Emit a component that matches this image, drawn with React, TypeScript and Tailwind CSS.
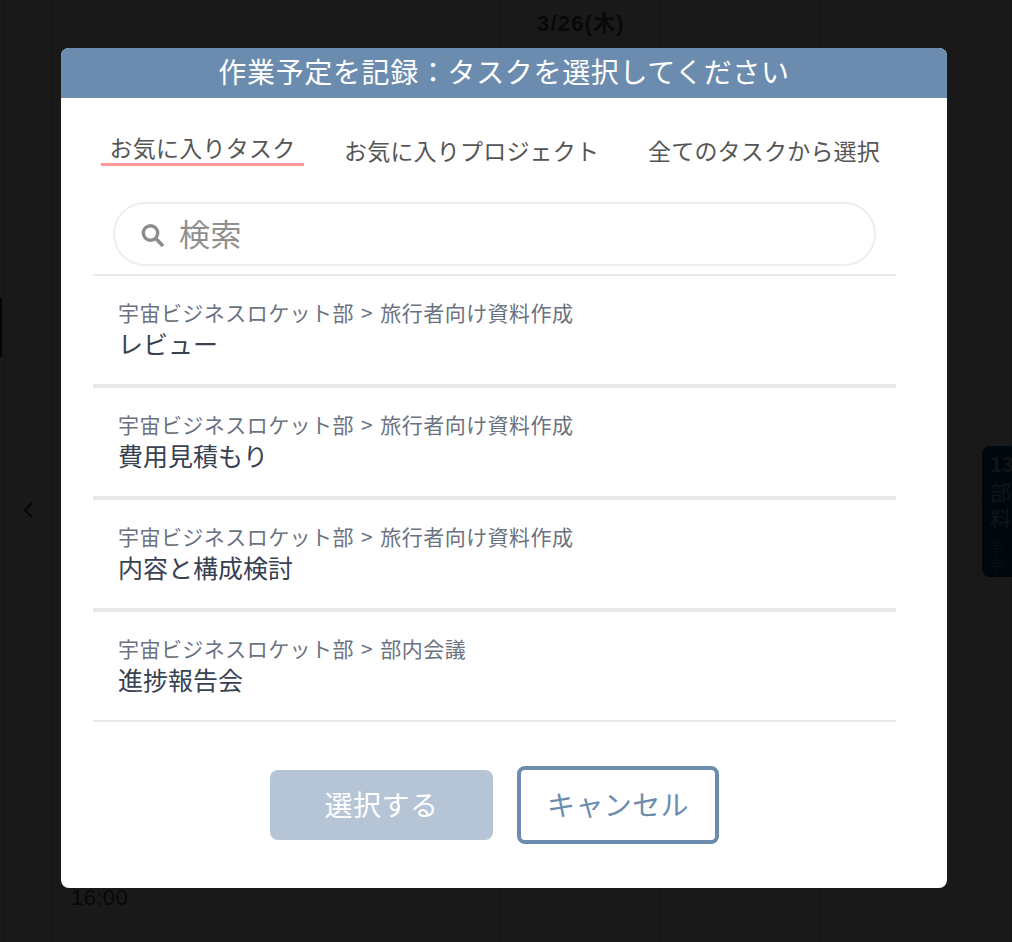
import React from "react";

const font = { fontFamily: '"Noto Sans CJK JP", "Liberation Sans", sans-serif' };
const rowHeights = [53, 41, 84, 80, 80, 80, 80, 80, 80, 80, 80, 80, 80];
const colWidths = [5, 47, 95, 195, 159, 160, 159, 159, 33];

const tasks = [
  { path: "宇宙ビジネスロケット部 > 旅行者向け資料作成", name: "レビュー" },
  { path: "宇宙ビジネスロケット部 > 旅行者向け資料作成", name: "費用見積もり" },
  { path: "宇宙ビジネスロケット部 > 旅行者向け資料作成", name: "内容と構成検討" },
  { path: "宇宙ビジネスロケット部 > 部内会議", name: "進捗報告会" },
];

export default function App() {
  return (
    <div className="relative w-[1012px] h-[942px] overflow-hidden bg-white" style={font}>
      {/* calendar behind the overlay */}
      <div className="flex flex-col">
        {rowHeights.map((h, r) => (
          <div key={r} className="flex border-b border-[#e4e4e4] box-border" style={{ height: h }}>
            {colWidths.map((w, c) => (
              <div key={c} className="border-r border-[#d8d8d8] box-border" style={{ width: w }} />
            ))}
          </div>
        ))}
      </div>
      <div className="absolute left-[537px] top-[9px] text-[22px] tracking-[1.2px] leading-[30px] font-bold text-[#555] whitespace-nowrap" style={{ fontFamily: '"Liberation Sans", "Noto Sans CJK JP", sans-serif' }}>
        3/26(木)
      </div>
      <div className="absolute left-[71px] top-[883px] text-[22px] tracking-[0.4px] leading-[30px] text-[#555]" style={{ fontFamily: '"Liberation Sans", sans-serif' }}>
        16:00
      </div>
      <svg className="absolute left-[22px] top-[501px]" width="12" height="18" viewBox="0 0 12 18" fill="none" stroke="#333" strokeWidth="2">
        <path d="M10 2L3 9l7 7" />
      </svg>
      <div className="absolute left-0 top-[298px] w-[2px] h-[59px] bg-[#00457a]" />
      <div className="absolute left-[982px] top-[446px] w-[60px] h-[131px] rounded-lg bg-[#00508c] text-white/70 px-[8px] pt-[7px] overflow-hidden">
        <div className="text-[20px] leading-[22px] font-bold">13</div>
        <div className="text-[21px] leading-[26px] mt-[3px]">部</div>
        <div className="text-[21px] leading-[26px]">料</div>
        <div className="text-[14px] leading-[18px] mt-[7px] text-white/40">宇</div>
        <div className="text-[14px] leading-[18px] text-white/40">宇</div>
      </div>

      {/* dim overlay */}
      <div className="absolute inset-0 bg-black/90" />

      {/* modal */}
      <div className="absolute left-[61px] top-[48px] w-[886px] h-[840px] bg-white rounded-lg overflow-hidden flex flex-col pl-[32px]">
        <div className="-ml-[32px] w-[886px] h-[50px] shrink-0 bg-[#6b8cae] text-white text-[28px] tracking-[0.65px] leading-[46px] text-center">
          作業予定を記録：タスクを選択してください
        </div>

        <div className="-ml-[32px] w-[886px] h-[104px] shrink-0 relative text-[#555]">
          <div className="absolute left-[40px] top-[33px] w-[203px] h-[35px] border-b-[3px] border-[#ff9999] text-center text-[23px] tracking-[0.25px] leading-[32px]">
            お気に入りタスク
          </div>
          <div className="absolute left-[283px] top-[36px] text-[23px] tracking-[0.2px] leading-[32px] whitespace-nowrap">お気に入りプロジェクト</div>
          <div className="absolute left-[587px] top-[36px] text-[23px] tracking-[0.2px] leading-[32px] whitespace-nowrap">全てのタスクから選択</div>
        </div>

        <div className="ml-[20px] w-[763px] h-[64px] shrink-0 rounded-full border-2 border-[#eeeeee] flex items-center pl-[26px] box-border">
          <svg width="25" height="25" viewBox="0 0 25 25" fill="none" stroke="#8c8c8c" strokeWidth="3.4" className="mt-[3px] -ml-[1px]">
            <circle cx="10.5" cy="10" r="7.2" />
            <path d="M15.8 15.5L23 23" strokeWidth="3.6" />
          </svg>
          <span className="ml-[14px] text-[31px] tracking-[0.5px] leading-[40px] text-[#8f8f8f] -mt-[2px]">検索</span>
        </div>

        <div className="w-[803px] mt-[8px] shrink-0 border-t-2 border-[#e8e8e8]">
          {tasks.map((t, i) => (
            <div
              key={i}
              className={
                i < 3
                  ? "h-[112px] box-border border-b-4 border-[#e8e8e8] pl-[25px] pt-[22px]"
                  : "h-[110px] box-border border-b-2 border-[#e8e8e8] pl-[25px] pt-[22px]"
              }
            >
              <div className="text-[21px] tracking-[0.45px] [word-spacing:2px] leading-[28px] text-[#6b7280] whitespace-nowrap">{t.path}</div>
              <div className="text-[25px] leading-[34px] text-[#374151]">{t.name}</div>
            </div>
          ))}
        </div>

        <div className="flex items-center mt-[44px] ml-[177px] gap-[24px]">
          <div className="w-[223px] h-[70px] rounded-lg bg-[#b5c5d6] text-white text-[28px] tracking-[0.5px] leading-[68px] text-center">
            選択する
          </div>
          <div className="w-[202px] h-[78px] box-border rounded-lg border-4 border-[#6b8cae] text-[#6b8cae] text-[28px] tracking-[0.4px] leading-[68px] text-center">
            キャンセル
          </div>
        </div>
      </div>
    </div>
  );
}
